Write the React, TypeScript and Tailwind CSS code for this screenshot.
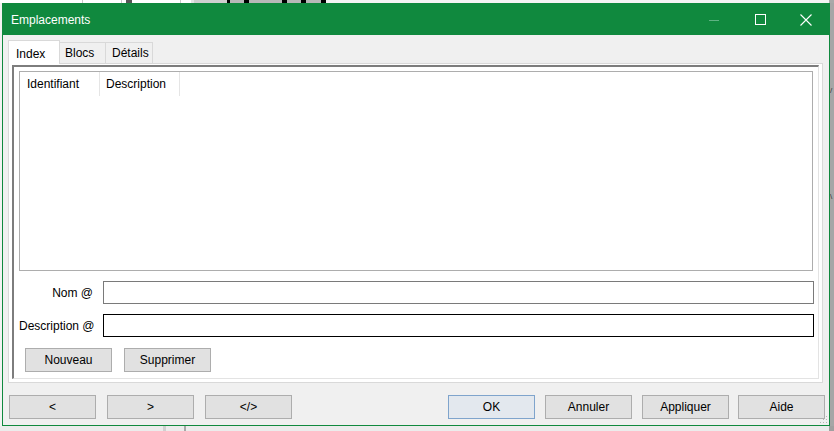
import React from "react"

const btn =
  "flex h-[24px] w-[87px] items-center justify-center border border-[#adadad] bg-[#e1e1e1] text-[12px] text-black"

export default function App() {
  return (
    <div className="flex h-[431px] w-[834px] flex-col overflow-hidden bg-white font-['Liberation_Sans',Arial,sans-serif] text-[12px] text-black">
      <TopStrip />
      <div className="flex h-[423px]">
        <div className="w-[2px] bg-[#f3f3f3]" />
        <div className="relative flex w-[828px] flex-col border border-[#10893e] bg-[#f0f0f0]">
          <TitleBar />
          <div className="flex flex-1 flex-col pl-[5px] pr-[6px] pt-[5px]">
            <Tabs />
            <section className="flex h-[320px] flex-col border border-[#d9d9d9] bg-white px-[3px] pb-[3px] pt-[1px]">
              <div className="flex flex-1 flex-col border-b border-l-2 border-r border-t-2 border-b-[#e3e3e3] border-l-[#7d7d7d] border-r-[#e3e3e3] border-t-[#7d7d7d] pb-[6px] pl-[5px] pr-[4px] pt-[4px]">
                <div className="mr-[1px] h-[200px] border border-[#adadad] bg-white">
                  <div className="flex h-[24px]">
                    <div className="flex w-[80px] items-center border-r border-[#e5e5e5] pl-[7px]">Identifiant</div>
                    <div className="flex w-[80px] items-center border-r border-[#e5e5e5] pl-[6px]">Description</div>
                  </div>
                </div>
                <Field label="Nom @" className="mt-[10px]" border="border-[#7a7a7a]" />
                <Field label="Description @" className="mt-[10px]" border="border-black" />
                <div className="mt-[11px] flex gap-[12px] pl-[6px]">
                  <button className={btn}>Nouveau</button>
                  <button className={btn}>Supprimer</button>
                </div>
              </div>
            </section>
          </div>
          <div className="flex pb-[6px] pl-[6px] pr-[4px]">
            <div className="flex gap-[11px]">
              <button className={btn}>&lt;</button>
              <button className={btn}>&gt;</button>
              <button className={btn}>&lt;/&gt;</button>
            </div>
            <div className="ml-auto flex items-end">
              <button className="flex h-[24px] w-[87px] items-center justify-center border border-[#7fa4cc] bg-[#e3e8ee] text-[12px]">OK</button>
              <button className={`${btn} ml-[10px]`}>Annuler</button>
              <button className={`${btn} ml-[10px]`}>Appliquer</button>
              <button className={`${btn} ml-[9px]`}>Aide</button>
            </div>
          </div>
          <Grip />
        </div>
        <RightStrip />
      </div>
      <div className="flex h-[5px] bg-[#ececec]">
        <div className="ml-[163px] w-[3px] bg-[#d0d0d0]" />
        <div className="ml-[18px] w-[2px] bg-[#a8a8a8]" />
        <div className="ml-auto w-[5px] bg-[#a0a0a0]" />
      </div>
    </div>
  )
}

function TopStrip() {
  return (
    <div className="flex h-[3px] bg-white">
      <div className="ml-[82px] w-px bg-[#c8c8c8]" />
      <div className="ml-[38px] w-px bg-[#c8c8c8]" />
      <div className="ml-[4px] w-[6px] bg-[#555]" />
      <div className="ml-[48px] w-px bg-[#c8c8c8]" />
      <div className="ml-[10px] w-[3px] bg-[#e4e4e4]" />
      <div className="w-[33px] bg-[#cfcfcf]" />
      <div className="w-[3px] bg-black" />
      <div className="w-[14px] bg-[#b8b8b8]" />
      <div className="w-[5px] bg-black" />
      <div className="w-[33px] bg-[#b8b8b8]" />
      <div className="w-[5px] bg-black" />
      <div className="w-[14px] bg-[#b8b8b8]" />
      <div className="w-[5px] bg-black" />
      <div className="w-[15px] bg-[#b8b8b8]" />
      <div className="w-[5px] bg-black" />
      <div className="flex-1 bg-[#f4f4f4]" />
      <div className="w-[5px] bg-[#a9a9a9]" />
    </div>
  )
}

function RightStrip() {
  return (
    <div className="flex w-[4px] flex-col bg-[#a6a6a6]">
      <div className="mt-[84px] h-[8px] text-[#333] text-[8px] leading-none">/</div>
      <div className="mt-[98px] h-[8px] text-[#333] text-[8px] leading-none">\</div>
    </div>
  )
}

function TitleBar() {
  return (
    <div className="flex h-[31px] shrink-0 items-center bg-[#10893e] text-white">
      <span className="pl-[8px] pt-[1px] text-[12px]">Emplacements</span>
      <div className="ml-auto flex h-full items-center">
        <div className="flex h-full w-[46px] items-center justify-center">
          <svg width="10" height="10" viewBox="0 0 10 10">
            <path d="M0 5.5H10" stroke="#5fb383" strokeWidth="1" />
          </svg>
        </div>
        <div className="flex h-full w-[46px] items-center justify-center">
          <svg width="11" height="11" viewBox="0 0 11 11">
            <rect x="0.5" y="0.5" width="10" height="10" fill="none" stroke="white" strokeWidth="1" />
          </svg>
        </div>
        <div className="flex h-full w-[46px] items-center justify-center">
          <svg width="12" height="12" viewBox="0 0 12 12">
            <path d="M0.5 0.5L11.5 11.5M11.5 0.5L0.5 11.5" stroke="white" strokeWidth="1.1" />
          </svg>
        </div>
      </div>
    </div>
  )
}

function Tabs() {
  return (
    <div className="relative z-10 -mb-px flex h-[24px] items-end">
      <div className="flex h-[24px] w-[52px] items-start border border-b-0 border-[#d9d9d9] bg-white pl-[7px] pt-[4px]">
        Index
      </div>
      <div className="mb-px flex h-[21px] w-[46px] items-center border border-b-0 border-l-0 border-[#d9d9d9] bg-[#f0f0f0] pl-[5px]">
        Blocs
      </div>
      <div className="mb-px flex h-[21px] w-[47px] items-center border border-b-0 border-l-0 border-[#d9d9d9] bg-[#f0f0f0] pl-[6px]">
        Détails
      </div>
    </div>
  )
}

function Field({ label, className, border }: { label: string; className: string; border: string }) {
  return (
    <div className={`flex items-center gap-[10px] ${className}`}>
      <span className="w-[74px] whitespace-nowrap text-right">{label}</span>
      <input type="text" className={`h-[23px] flex-1 border bg-white outline-none ${border}`} />
    </div>
  )
}

function Grip() {
  return (
    <svg width="8" height="8" viewBox="0 0 8 8" className="absolute bottom-[1px] right-[1px]">
      <rect x="6" y="0" width="1" height="1" fill="#b5b5b5" />
      <rect x="3" y="3" width="1" height="1" fill="#b5b5b5" />
      <rect x="6" y="3" width="1" height="1" fill="#b5b5b5" />
      <rect x="0" y="6" width="1" height="1" fill="#b5b5b5" />
      <rect x="3" y="6" width="1" height="1" fill="#b5b5b5" />
      <rect x="6" y="6" width="1" height="1" fill="#b5b5b5" />
    </svg>
  )
}
